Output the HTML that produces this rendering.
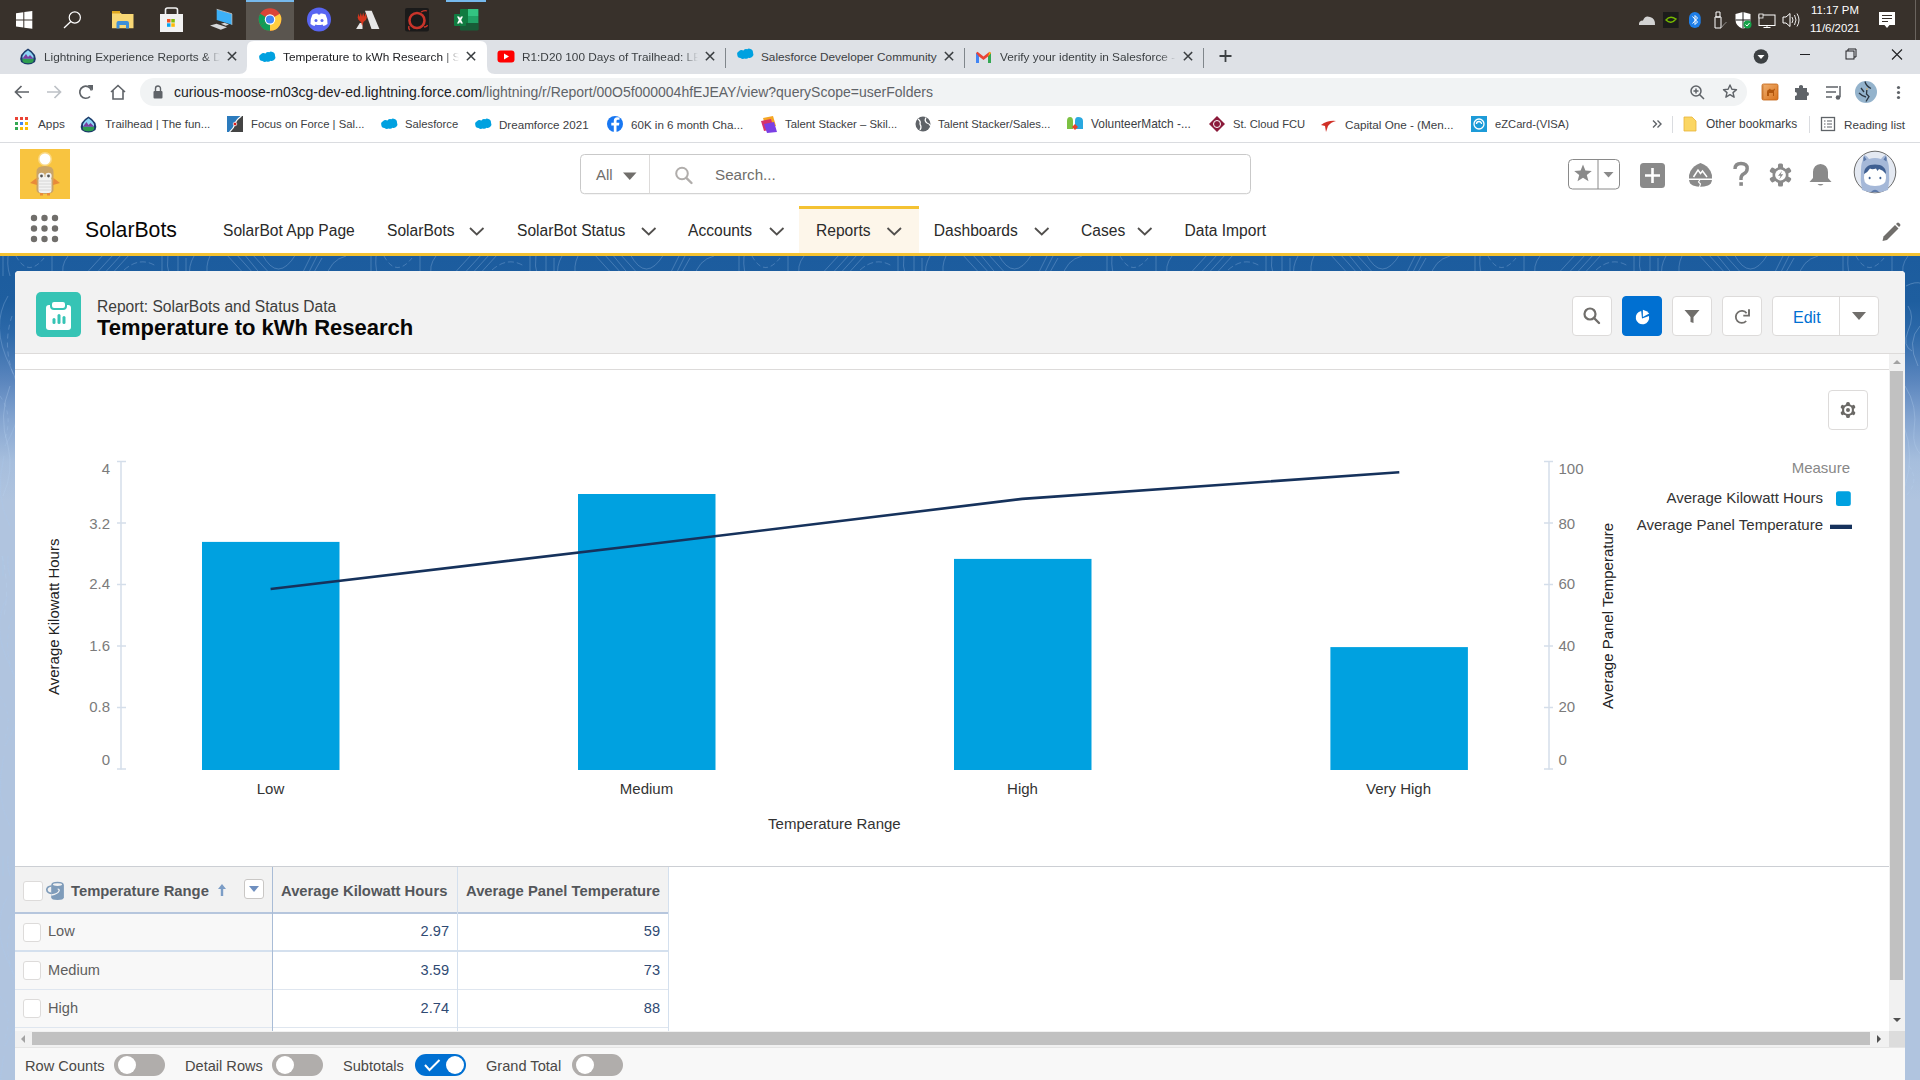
<!DOCTYPE html>
<html><head><meta charset="utf-8">
<style>
*{box-sizing:border-box;margin:0;padding:0}
html,body{width:1920px;height:1080px;overflow:hidden;background:#fff;font-family:"Liberation Sans",sans-serif;position:relative}
.a{position:absolute}
.t{position:absolute;white-space:nowrap;line-height:1}
#taskbar{left:0;top:0;width:1920px;height:40px;background:#38312b}
#tabs{left:0;top:40px;width:1920px;height:34px;background:#dee1e6}
#toolbar{left:0;top:74px;width:1920px;height:35px;background:#fff}
#bm{left:0;top:109px;width:1920px;height:34px;background:#fff;border-bottom:1px solid #d9d9d9}
#sfh{left:0;top:143px;width:1920px;height:63px;background:#fff}
#nav{left:0;top:206px;width:1920px;height:47px;background:#fff}
#ybar{left:0;top:253px;width:1920px;height:3px;background:#f4c232}
#bg{left:0;top:256px;width:1920px;height:824px;background:linear-gradient(#1c5c9e 0px,#1e5e9f 45px,#2d69a9 78px,#5b86be 125px,#86a6d1 165px,#a6bedd 205px,#b0c4df 245px,#b0c4df 824px)}
#card{left:15px;top:271px;width:1890px;height:820px;background:#fff;border-radius:4px;overflow:hidden}
</style></head>
<body>
<div id="taskbar" class="a"></div>
<div id="tabs" class="a"></div>
<div id="toolbar" class="a"></div>
<div id="bm" class="a"></div>

<!-- TASKBAR -->
<svg class="a" style="left:0;top:0" width="1920" height="40" viewBox="0 0 1920 40">
 <rect x="246" y="0" width="48" height="40" fill="#5a554f"/>
 <rect x="246" y="0" width="48" height="2" fill="#76b9ed"/>
 <rect x="446" y="0" width="40" height="2" fill="#76b9ed"/>
 <!-- windows -->
 <g fill="#fff"><path d="M16 13.3 L23.3 12.3 V19.4 H16 Z"/><path d="M24.3 12.1 L32.3 11 V19.4 H24.3 Z"/><path d="M16 20.4 H23.3 V27.5 L16 26.5 Z"/><path d="M24.3 20.4 H32.3 V28.8 L24.3 27.7 Z"/></g>
 <!-- search -->
 <circle cx="74.8" cy="17.5" r="5.6" fill="none" stroke="#fff" stroke-width="1.2"/><line x1="70.8" y1="21.5" x2="64" y2="28" stroke="#fff" stroke-width="1.3"/>
 <!-- folder -->
 <path d="M112 12.5 H120 L122 14 H133.5 V28.3 H112 Z" fill="#f8d775"/><rect x="112" y="11" width="8" height="2.5" fill="#e0a820"/>
 <path d="M116.5 28.5 V23 Q116.5 21 118.5 21 H127 Q129 21 129 23 V28.5 H126 V25 H119.5 V28.5 Z" fill="#3d8fd9"/>
 <!-- store -->
 <path d="M160 14 H183 V32 H160 Z" fill="#f2f2f2"/><path d="M165.5 14 V10 Q165.5 8 167.5 8 H175.5 Q177.5 8 177.5 10 V14" fill="none" stroke="#f2f2f2" stroke-width="1.6"/>
 <rect x="167" y="19" width="3.5" height="3.5" fill="#f35325"/><rect x="171.3" y="19" width="3.5" height="3.5" fill="#81bc06"/><rect x="167" y="23.3" width="3.5" height="3.5" fill="#05a6f0"/><rect x="171.3" y="23.3" width="3.5" height="3.5" fill="#ffba08"/>
 <!-- remote desktop -->
 <path d="M216.7 9.5 L232 14 V24.8 L216.7 20 Z" fill="#3cb0f7"/><path d="M216.7 9.3 L232 13.8" stroke="#d0d0d0" stroke-width="0.8"/><path d="M231.9 14 V25" stroke="#b8b8b8" stroke-width="0.8"/><path d="M210 25.6 L216.5 23.7 L227 27.2 L220.8 29.8 Z" fill="#d6d8da"/><path d="M221 23.8 L224.5 22.8 L229 24.6 L225.8 25.8 Z" fill="#d6d8da"/>
 <!-- chrome -->
 <circle cx="270" cy="19.5" r="11.3" fill="#db4437"/>
 <path d="M270 19.5 L260.2 25.15 A11.3 11.3 0 0 1 260.2 13.85 Z" fill="#0f9d58"/>
 <path d="M270 19.5 L270 30.8 A11.3 11.3 0 0 1 260.2 25.15 Z" fill="#0f9d58"/>
 <path d="M270 19.5 L279.8 13.85 A11.3 11.3 0 0 1 270 30.8 Z" fill="#ffcd40"/>
 <circle cx="270" cy="19.5" r="5.2" fill="#fff"/><circle cx="270" cy="19.5" r="4.1" fill="#4285f4"/>
 <!-- discord -->
 <circle cx="319" cy="19.5" r="12" fill="#5865f2"/>
 <path d="M312.5 14.5 Q316 13 317.5 13.5 L318 14.5 Q319 14.3 320 14.5 L320.5 13.5 Q322 13 325.5 14.5 Q328 19 327.5 24 Q325.5 25.5 323.5 26 L322.5 24.5 Q319 25.5 315.5 24.5 L314.5 26 Q312.5 25.5 310.5 24 Q310 19 312.5 14.5 Z" fill="#fff"/>
 <circle cx="316" cy="20.5" r="1.5" fill="#5865f2"/><circle cx="322" cy="20.5" r="1.5" fill="#5865f2"/>
 <!-- arena -->
 <path d="M365 10.7 H371.7 L379.4 28.9 H371.5 Z" fill="#e6e6e6"/><path d="M359.8 23 H362.5 V28.9 H356.1 Z" fill="#e6e6e6"/>
 <path d="M357.6 17.5 L358.6 13.5 L359.5 17 L360.8 12.8 L362 16.8 L363.2 12.6 L364.4 16.8 L365.6 13 L366.8 17.5 Q366.5 20.5 363.5 22 L362.2 26 L361 22 Q358 20.5 357.6 17.5 Z" fill="#d4361e"/>
 <!-- ffxiv -->
 <rect x="405" y="8" width="24" height="23.5" rx="2" fill="#1a1a1a"/><circle cx="417" cy="20.5" r="7.5" fill="none" stroke="#c8342a" stroke-width="2.6"/><path d="M421 12 Q425 10 427 11 M409 26 Q408 29 410 30 M424 27 Q427 27 427.5 25" fill="none" stroke="#c8342a" stroke-width="1.3"/>
 <!-- excel -->
 <rect x="460" y="9" width="18.3" height="21.2" rx="1" fill="#107c41"/><rect x="468" y="9" width="10.3" height="7" fill="#33c481"/><rect x="468" y="16" width="10.3" height="7" fill="#21a366"/><rect x="460" y="23" width="18.3" height="7.2" fill="#185c37"/>
 <rect x="454" y="14" width="12" height="12" rx="1" fill="#107c41"/><path d="M457 16.5 L459.2 16.5 L460 18.3 L460.9 16.5 H463 L461.2 20 L463 23.5 H460.9 L460 21.7 L459.1 23.5 H457 L458.8 20 Z" fill="#fff"/>
 <!-- tray -->
 <path d="M1639 25 Q1638.5 20.5 1643 20.5 Q1645 15 1650 17 Q1655.5 18.5 1655 25 Z" fill="#d3d3d3"/>
 <rect x="1663" y="12" width="15.6" height="16" fill="#1c1c1c"/><path d="M1666 20 Q1670 15 1676 19 Q1671 25 1666 20 Z" fill="none" stroke="#76b900" stroke-width="1.4"/>
 <rect x="1689" y="12" width="11.7" height="16" rx="5.8" fill="#1e7ee8"/><path d="M1692.5 16.5 L1697.5 22 L1695 24.5 V15.5 L1697.5 18 L1692.5 23.5" fill="none" stroke="#fff" stroke-width="1"/>
 <path d="M1715 17 H1721 V28 H1715 Z M1716 12 H1720 V17 H1716 Z" fill="none" stroke="#fff" stroke-width="1"/><path d="M1721.5 27.5 L1723.5 25 L1726.5 22" fill="none" stroke="#aaa" stroke-width="0.8"/>
 <path d="M1735.5 14 L1743 12 L1750.5 14 V20 Q1750.5 26 1743 29 Q1735.5 26 1735.5 20 Z" fill="#fff"/><path d="M1743 12 V29 M1735.5 20 H1750.5" stroke="#1a1a1a" stroke-width="1"/><circle cx="1747.5" cy="24.5" r="4" fill="#16a34a"/><path d="M1745.5 24.5 L1747 26 L1749.5 23" fill="none" stroke="#fff" stroke-width="1"/>
 <rect x="1759" y="15" width="16" height="10.5" fill="none" stroke="#fff" stroke-width="1"/><path d="M1767 25.5 V27.5 M1763.5 27.5 H1770.5" stroke="#fff" stroke-width="1"/><rect x="1759" y="14" width="4" height="4" fill="#38312b" stroke="#fff" stroke-width="0.8"/>
 <path d="M1783 17 H1786 L1790 13.5 V26.5 L1786 23 H1783 Z" fill="none" stroke="#fff" stroke-width="1"/><path d="M1792 17 Q1794 20 1792 23 M1794.5 15 Q1797.5 20 1794.5 25 M1797 13.5 Q1801 20 1797 26.5" fill="none" stroke="#fff" stroke-width="0.9"/>
 <path d="M1879 12 H1895 V25 H1889.5 L1887 28 L1884.5 25 H1879 Z" fill="#fff"/><path d="M1882 15.5 H1892 M1882 18.5 H1892 M1882 21.5 H1888" stroke="#38312b" stroke-width="1"/>
 <rect x="1915" y="0" width="1" height="40" fill="#6a645e"/>
</svg>
<div class="t" style="left:1810px;top:5px;font-size:11.4px;color:#fff;width:50px;text-align:center">11:17 PM</div>
<div class="t" style="left:1810px;top:23px;font-size:11.4px;color:#fff;width:50px;text-align:center">11/6/2021</div>

<!-- CHROME TABS -->
<svg class="a" style="left:0;top:40px" width="1920" height="34" viewBox="0 40 1920 34">
 <path d="M239 74 Q247 74 247 66 V48 Q247 41 254 41 H480 Q487 41 487 48 V66 Q487 74 495 74 Z" fill="#fff"/>
 <g transform="translate(19.5 48)"><path d="M8.5 0.5 Q13 3 15.5 7 Q17 11 15.5 14 Q12 16.5 8.5 16.5 Q5 16.5 1.5 14 Q0 11 1.5 7 Q4 3 8.5 0.5 Z" fill="#1b3a6a"/><path d="M8.5 2.3 Q12 4.5 14 8 L14 10.5 H3 L3 8 Q5 4.5 8.5 2.3 Z" fill="#8ed5f5"/><path d="M3 10.5 L6.5 6 L8.5 9 L10.5 7 L14 10.5 Z" fill="#7c3d9f"/><path d="M2.8 11 H14.2 Q14.5 13.5 13 14.5 Q11 15.2 8.5 15.2 Q6 15.2 4 14.5 Q2.5 13.5 2.8 11 Z" fill="#2e9e4f"/></g>
 <g stroke="#3c4043" stroke-width="1.5" stroke-linecap="square"><path d="M228.4 52.6 L235.6 59.8 M235.6 52.6 L228.4 59.8"/><path d="M467.4 52.6 L474.6 59.8 M474.6 52.6 L467.4 59.8"/><path d="M706.4 52.6 L713.6 59.8 M713.6 52.6 L706.4 59.8"/><path d="M945.4 52.6 L952.6 59.8 M952.6 52.6 L945.4 59.8"/><path d="M1184.4 52.6 L1191.6 59.8 M1191.6 52.6 L1184.4 59.8"/></g>
 <path transform="translate(259 51)" d="M6.5 2.5 Q8 0.5 10.3 1.3 Q11.5 0 13.5 1 Q16 1.5 16 4.5 Q17 6.5 15.5 8.5 Q14 10.5 11.5 9.8 Q10 11.5 7.5 10.5 Q5.5 11.5 3.5 10 Q0.5 10 0.3 7 Q-0.5 4.5 2 3.3 Q3.5 1.3 6.5 2.5 Z" fill="#00a1e0"/><path transform="translate(737 48)" d="M6.5 2.5 Q8 0.5 10.3 1.3 Q11.5 0 13.5 1 Q16 1.5 16 4.5 Q17 6.5 15.5 8.5 Q14 10.5 11.5 9.8 Q10 11.5 7.5 10.5 Q5.5 11.5 3.5 10 Q0.5 10 0.3 7 Q-0.5 4.5 2 3.3 Q3.5 1.3 6.5 2.5 Z" fill="#00a1e0"/>
 <rect x="497.5" y="50.5" width="17" height="12" rx="3" fill="#ff0000"/><path d="M504 53.5 V59.5 L509 56.5 Z" fill="#fff"/>
 <rect x="725" y="48" width="1" height="20" fill="#80868b"/>
 <rect x="964" y="48" width="1" height="20" fill="#80868b"/>
 <rect x="1203" y="48" width="1" height="20" fill="#80868b"/>
 <g transform="translate(976 51)"><path d="M0 2 V12 H3 V5.5 L7.5 9 L12 5.5 V12 H15 V2 L13.5 0.8 L7.5 5.5 L1.5 0.8 Z" fill="#ea4335"/><path d="M0 2 V12 H3 V5.5 Z" fill="#4285f4"/><path d="M12 5.5 V12 H15 V2 Z" fill="#34a853"/><path d="M13.5 0.8 L15 2 L12 5.5 Z" fill="#fbbc04"/></g>
 <path d="M1225.5 50 V62 M1219.5 56 H1231.5" stroke="#3c4043" stroke-width="1.8"/>
 <circle cx="1761" cy="56.5" r="7.3" fill="#3c4043"/><path d="M1757.5 55 H1764.5 L1761 59 Z" fill="#fff"/>
 <path d="M1800 54.5 H1810" stroke="#202124" stroke-width="1"/>
 <rect x="1846" y="51" width="8" height="8" fill="none" stroke="#202124" stroke-width="1"/><path d="M1848 51 V49 H1856 V57 H1854" fill="none" stroke="#202124" stroke-width="1"/>
 <path d="M1892 49.5 L1902 59.5 M1902 49.5 L1892 59.5" stroke="#202124" stroke-width="1.1"/>
</svg>
<div class="t" style="left:44px;top:51.5px;font-size:11.8px;color:#3c4043;width:176px;overflow:hidden;-webkit-mask-image:linear-gradient(90deg,#000 160px,transparent 176px)">Lightning Experience Reports &amp; Dashboards</div>
<div class="t" style="left:283px;top:51.5px;font-size:11.8px;color:#202124;width:176px;overflow:hidden;-webkit-mask-image:linear-gradient(90deg,#000 160px,transparent 176px)">Temperature to kWh Research | Salesforce</div>
<div class="t" style="left:522px;top:51.5px;font-size:11.8px;color:#3c4043;width:176px;overflow:hidden;-webkit-mask-image:linear-gradient(90deg,#000 160px,transparent 176px)">R1:D20 100 Days of Trailhead: LEX Reports</div>
<div class="t" style="left:761px;top:51.5px;font-size:11.8px;color:#3c4043;width:178px;overflow:hidden">Salesforce Developer Community</div>
<div class="t" style="left:1000px;top:51.5px;font-size:11.8px;color:#3c4043;width:176px;overflow:hidden;-webkit-mask-image:linear-gradient(90deg,#000 160px,transparent 176px)">Verify your identity in Salesforce - Gmail</div>
<!-- TOOLBAR -->
<svg class="a" style="left:0;top:74px" width="1920" height="35" viewBox="0 74 1920 35">
 <rect x="140" y="78" width="1607" height="28" rx="14" fill="#f1f3f4"/>
 <path d="M29 92 H16 M21.5 86 L15.5 92 L21.5 98" fill="none" stroke="#5f6368" stroke-width="1.7"/>
 <path d="M47 92 H60 M54.5 86 L60.5 92 L54.5 98" fill="none" stroke="#bdc1c6" stroke-width="1.7"/>
 <path d="M91.5 90.5 A6 6 0 1 0 90 96.5" fill="none" stroke="#5f6368" stroke-width="1.7"/><path d="M87.5 85 H93 V90.5 Z" fill="#5f6368"/>
 <path d="M111 92 L118 85.5 L125 92 M113 90.5 V99 H123 V90.5" fill="none" stroke="#5f6368" stroke-width="1.6"/>
 <rect x="153.5" y="91" width="9" height="7.5" rx="1" fill="#5f6368"/><path d="M155.5 91 V88.5 A2.5 2.5 0 0 1 160.5 88.5 V91" fill="none" stroke="#5f6368" stroke-width="1.4"/>
 <circle cx="1696" cy="91" r="5" fill="none" stroke="#5f6368" stroke-width="1.5"/><path d="M1699.5 94.5 L1704 99 M1693.5 91 H1698.5 M1696 88.5 V93.5" stroke="#5f6368" stroke-width="1.5"/>
 <path d="M1730 85 L1731.9 89.3 L1736.5 89.6 L1733 92.6 L1734.1 97.2 L1730 94.7 L1725.9 97.2 L1727 92.6 L1723.5 89.6 L1728.1 89.3 Z" fill="none" stroke="#5f6368" stroke-width="1.4" stroke-linejoin="round"/>
 <defs><linearGradient id="cam" x1="0" y1="0" x2="1" y2="1"><stop offset="0" stop-color="#f0b070"/><stop offset="1" stop-color="#d9731c"/></linearGradient></defs><rect x="1762" y="84" width="16" height="16" rx="1.5" fill="url(#cam)" stroke="#c25f10" stroke-width="0.8"/><path d="M1763 85.5 V98.5" stroke="#a04d0a" stroke-width="0.8" stroke-dasharray="1 1"/><path d="M1767 96 V92 Q1767 89.5 1769 89.5 L1770 88.5 L1771 90 Q1772 89 1773 90 L1774.5 88.5 L1775 89.5 L1774 91 V96 H1773 V93 L1769 93 V96 Z" fill="#b2560c"/>
 <path d="M1795 88 H1799 V86 Q1801 84 1803 86 V88 H1807 V92 Q1809 92 1809 94 Q1809 96 1807 96 V100 H1795 V96 Q1797 96 1797 94 Q1797 92 1795 92 Z" fill="#5f6368"/>
 <path d="M1826 87 H1838 M1826 92 H1836 M1826 97 H1832" stroke="#5f6368" stroke-width="1.5"/><path d="M1840 86 V97" stroke="#5f6368" stroke-width="1.5"/><circle cx="1838" cy="97.5" r="2.3" fill="#5f6368"/>
 <circle cx="1866" cy="92" r="11" fill="#94b3cc"/><path d="M1865 81.5 Q1866 86 1871 88.5 M1867 88 L1866.5 94 L1869 96.5 L1866 101.5 M1859 93 Q1862 96 1866 97 M1861 88 L1864 92" fill="none" stroke="#2b3642" stroke-width="1.3"/><circle cx="1867" cy="89" r="1" fill="#d8c9a0"/>
 <circle cx="1898.5" cy="87.5" r="1.6" fill="#5f6368"/><circle cx="1898.5" cy="92.5" r="1.6" fill="#5f6368"/><circle cx="1898.5" cy="97.5" r="1.6" fill="#5f6368"/>
</svg>
<div class="t" style="left:174px;top:85px;font-size:14px;color:#202124">curious-moose-rn03cg-dev-ed.lightning.force.com<span style="color:#5f6368">/lightning/r/Report/00O5f000004hfEJEAY/view?queryScope=userFolders</span></div>
<!-- BOOKMARKS -->
<svg class="a" style="left:0;top:109px" width="1920" height="33" viewBox="0 109 1920 33">
 <g><rect x="15" y="117" width="3" height="3" fill="#ea4335"/><rect x="20" y="117" width="3" height="3" fill="#ea4335"/><rect x="25" y="117" width="3" height="3" fill="#ea4335"/><rect x="15" y="122" width="3" height="3" fill="#34a853"/><rect x="20" y="122" width="3" height="3" fill="#4285f4"/><rect x="25" y="122" width="3" height="3" fill="#fbbc04"/><rect x="15" y="127" width="3" height="3" fill="#34a853"/><rect x="20" y="127" width="3" height="3" fill="#fbbc04"/><rect x="25" y="127" width="3" height="3" fill="#fbbc04"/></g>
 <g transform="translate(80 116)"><path d="M8.5 0.5 Q13 3 15.5 7 Q17 11 15.5 14 Q12 16.5 8.5 16.5 Q5 16.5 1.5 14 Q0 11 1.5 7 Q4 3 8.5 0.5 Z" fill="#1b3a6a"/><path d="M8.5 2.3 Q12 4.5 14 8 L14 10.5 H3 L3 8 Q5 4.5 8.5 2.3 Z" fill="#8ed5f5"/><path d="M3 10.5 L6.5 6 L8.5 9 L10.5 7 L14 10.5 Z" fill="#7c3d9f"/><path d="M2.8 11 H14.2 Q14.5 13.5 13 14.5 Q11 15.2 8.5 15.2 Q6 15.2 4 14.5 Q2.5 13.5 2.8 11 Z" fill="#2e9e4f"/></g>
 <path d="M227 116 H243 V132 H227 Z" fill="#444"/><path d="M227 116 H241.5 Q236 120 235 124 Q234 128 229.5 132 H227 Z" fill="#2c7bbd"/><path d="M241.5 116 Q236 120 235 124 Q234 128 229.5 132" fill="none" stroke="#fff" stroke-width="1.1"/><circle cx="235" cy="124" r="1.8" fill="#e0201b" stroke="#fff" stroke-width="0.7"/>
 <path transform="translate(381 118)" d="M6.5 2.5 Q8 0.5 10.3 1.3 Q11.5 0 13.5 1 Q16 1.5 16 4.5 Q17 6.5 15.5 8.5 Q14 10.5 11.5 9.8 Q10 11.5 7.5 10.5 Q5.5 11.5 3.5 10 Q0.5 10 0.3 7 Q-0.5 4.5 2 3.3 Q3.5 1.3 6.5 2.5 Z" fill="#00a1e0"/><path transform="translate(475 118)" d="M6.5 2.5 Q8 0.5 10.3 1.3 Q11.5 0 13.5 1 Q16 1.5 16 4.5 Q17 6.5 15.5 8.5 Q14 10.5 11.5 9.8 Q10 11.5 7.5 10.5 Q5.5 11.5 3.5 10 Q0.5 10 0.3 7 Q-0.5 4.5 2 3.3 Q3.5 1.3 6.5 2.5 Z" fill="#00a1e0"/>
 <circle cx="615" cy="124" r="8" fill="#1877f2"/><path d="M616.5 132 V125.5 H619 L619.4 122.8 H616.5 V121 Q616.5 119.8 617.8 119.8 H619.5 V117.5 Q618.5 117.3 617.3 117.3 Q613.8 117.3 613.8 120.8 V122.8 H611.3 V125.5 H613.8 V132 Z" fill="#fff"/>
 <path d="M763 118 L773 116 L776 126 L766 128 Z" fill="#f5a623"/><path d="M761 121 L771 119 L774 129 L764 131 Z" fill="#d6336c"/><path d="M764 124 L774 122 L777 132 L767 133 Z" fill="#7b3fe4"/>
 <circle cx="923" cy="124" r="7.5" fill="#5f6368"/><path d="M918 119 Q921 121 920 124 Q922 127 920 130 M926 117.5 Q924 121 927 123 Q930 124 930.5 126" fill="none" stroke="#fff" stroke-width="1.3"/>
 <path d="M1067 121 Q1067 117 1070 117 Q1073 117 1073 121 V129 H1067 Z" fill="#7cc142"/><path d="M1075 121 Q1075 117 1078 117 Q1083 117 1083 121 V129 H1075 Z" fill="#29a8e0"/><path d="M1072 127 L1075 124 L1078 127 L1075 130 Z" fill="#e8412c"/>
 <path d="M1217 116 L1225 124 L1217 132 L1209 124 Z" fill="#8b1a3a"/><circle cx="1217" cy="124" r="3.5" fill="none" stroke="#fff" stroke-width="1"/>
 <path d="M1321 125 Q1328 120 1336 121 Q1331 122 1328 126 L1326 132 L1325 126 Z" fill="#d03027"/>
 <rect x="1471" y="116" width="16" height="16" fill="#1d9bd8"/><path d="M1479 124 m-5 0 a5 5 0 1 0 10 0 a5 5 0 1 0 -10 0 M1479 124 m-2.5 0 a2.5 2.5 0 1 1 5 0" fill="none" stroke="#fff" stroke-width="1.3"/>
 <path d="M1653 120.5 L1656.5 124 L1653 127.5 M1657.5 120.5 L1661 124 L1657.5 127.5" fill="none" stroke="#5f6368" stroke-width="1.4"/>
 <rect x="1672" y="116" width="1" height="17" fill="#dadce0"/>
 <path d="M1684 117 H1692 L1696 121 V131 H1684 Z" fill="#fbd663" stroke="#e8b43a" stroke-width="0.8"/>
 <rect x="1809" y="116" width="1" height="17" fill="#dadce0"/>
 <rect x="1821.5" y="117.5" width="13" height="13" fill="none" stroke="#5f6368" stroke-width="1.3"/><path d="M1824 121 H1825.5 M1827 121 H1832 M1824 124 H1825.5 M1827 124 H1832 M1824 127 H1825.5 M1827 127 H1832" stroke="#5f6368" stroke-width="1.2"/>
</svg>
<div class="t" style="left:38px;top:118.61px;font-size:11.8px;color:#3c4043">Apps</div>
<div class="t" style="left:105px;top:118.87px;font-size:11.5px;color:#3c4043">Trailhead | The fun...</div>
<div class="t" style="left:251px;top:119.03px;font-size:11.3px;color:#3c4043">Focus on Force | Sal...</div>
<div class="t" style="left:405px;top:119.08px;font-size:11.25px;color:#3c4043">Salesforce</div>
<div class="t" style="left:499px;top:118.78px;font-size:11.6px;color:#3c4043">Dreamforce 2021</div>
<div class="t" style="left:631px;top:118.78px;font-size:11.6px;color:#3c4043">60K in 6 month Cha...</div>
<div class="t" style="left:785px;top:118.99px;font-size:11.35px;color:#3c4043">Talent Stacker – Skil...</div>
<div class="t" style="left:938px;top:119.03px;font-size:11.3px;color:#3c4043">Talent Stacker/Sales...</div>
<div class="t" style="left:1091px;top:118.53px;font-size:11.9px;color:#3c4043">VolunteerMatch -...</div>
<div class="t" style="left:1233px;top:119.12px;font-size:11.2px;color:#3c4043">St. Cloud FCU</div>
<div class="t" style="left:1345px;top:118.70px;font-size:11.7px;color:#3c4043">Capital One - (Men...</div>
<div class="t" style="left:1495px;top:119.12px;font-size:11.2px;color:#3c4043">eZCard-(VISA)</div>
<div class="t" style="left:1706px;top:118.53px;font-size:11.9px;color:#3c4043">Other bookmarks</div>
<div class="t" style="left:1844px;top:118.70px;font-size:11.7px;color:#3c4043">Reading list</div>
<div id="sfh" class="a"></div>
<div id="nav" class="a"></div>

<!-- SF HEADER -->
<div class="a" style="left:0;top:142px;width:1920px;height:1px;background:#dadce0"></div>
<svg class="a" style="left:0;top:143px" width="1920" height="113" viewBox="0 143 1920 113">
 <rect x="20" y="149" width="50" height="50" fill="#f8c440"/>
 <circle cx="45" cy="159" r="5.5" fill="#fff"/><circle cx="45" cy="159" r="7" fill="#fff" opacity="0.35"/>
 <path d="M36.5 172 Q36 166 45 166 Q54 166 53.5 172 V190 Q53.5 194 45 194 Q36.5 194 36.5 190 Z" fill="#c9a468"/>
 <rect x="38.5" y="177" width="13" height="16" rx="3" fill="#f2f2f2"/><path d="M39 181 H51 M39 184 H51 M39 187 H51 M39 190 H51" stroke="#cfcfcf" stroke-width="0.8"/>
 <circle cx="41.5" cy="176" r="3.2" fill="#f2f2f2"/><circle cx="48.5" cy="176" r="3.2" fill="#f2f2f2"/><circle cx="41.5" cy="176" r="1.4" fill="#555"/><circle cx="48.5" cy="176" r="1.4" fill="#555"/>
 <path d="M36.5 178 L30 183 L37 185 Z M53.5 178 L60 183 L53 185 Z" fill="#e88a3a"/>
 <rect x="40" y="193" width="3" height="2.5" fill="#e88a3a"/><rect x="47" y="193" width="3" height="2.5" fill="#e88a3a"/>
 <!-- search -->
 <rect x="580.5" y="154.5" width="670" height="39.2" rx="4" fill="#fff" stroke="#c9c9c9"/>
 <line x1="649.5" y1="155" x2="649.5" y2="193.2" stroke="#dddbda"/>
 <path d="M623 172.5 H636.5 L629.75 180 Z" fill="#706e6b"/>
 <circle cx="682" cy="173.5" r="5.8" fill="none" stroke="#b0adab" stroke-width="2"/><path d="M686.3 177.8 L691.5 183" stroke="#b0adab" stroke-width="2.4" stroke-linecap="round"/>
 <!-- fav -->
 <rect x="1568.5" y="159.5" width="51" height="29.5" rx="4" fill="#fff" stroke="#8a8a8a"/>
 <line x1="1598" y1="160" x2="1598" y2="189" stroke="#8a8a8a"/>
 <path d="M1583 164.5 L1585.4 170.6 L1591.8 170.9 L1586.8 175 L1588.5 181.2 L1583 177.7 L1577.5 181.2 L1579.2 175 L1574.2 170.9 L1580.6 170.6 Z" fill="#8a8a8a"/>
 <path d="M1603.5 172 H1613.5 L1608.5 177.5 Z" fill="#8a8a8a"/>
 <rect x="1640" y="163" width="25" height="25" rx="3.5" fill="#8a8a8a"/><path d="M1652.5 168 V183 M1645 175.5 H1660" stroke="#fff" stroke-width="2.6"/>
 <path d="M1700.5 163 Q1707.5 165.5 1710.5 171 Q1712.5 175 1712 178.5 H1689 Q1688.5 175 1690.5 171 Q1693.5 165.5 1700.5 163 Z" fill="#8a8a8a"/><path d="M1693.5 177 L1698 170 L1700.5 173.5 L1702.5 171 L1707 177" fill="none" stroke="#fff" stroke-width="1.5"/><path d="M1689 180 H1712 Q1711.5 184 1708 185.5 Q1704 186.8 1700.5 186.8 Q1697 186.8 1693 185.5 Q1689.5 184 1689 180 Z" fill="#8a8a8a"/><path d="M1700 179.5 L1698.5 182 L1700.5 184 L1699.5 187" fill="none" stroke="#fff" stroke-width="1.1"/>
 <path d="M1735 169 Q1735 163.5 1741 163.5 Q1747.2 163.5 1747.2 168.5 Q1747.2 172 1743.5 174 Q1741 175.5 1741 178.5 V180" fill="none" stroke="#8a8a8a" stroke-width="3.4"/><rect x="1739.3" y="182.2" width="3.6" height="3.6" fill="#8a8a8a"/>
 <g fill="#8a8a8a"><circle cx="1780.5" cy="175" r="8"/><rect x="1778" y="163.5" width="5" height="23" rx="1.5"/><rect x="1778" y="163.5" width="5" height="23" rx="1.5" transform="rotate(60 1780.5 175)"/><rect x="1778" y="163.5" width="5" height="23" rx="1.5" transform="rotate(120 1780.5 175)"/></g>
 <circle cx="1780.5" cy="175" r="5.4" fill="#fff"/><path d="M1782.2 170.8 L1778 175.8 H1780.6 L1779.2 179.4 L1783.2 174.2 H1780.6 Z" fill="#8a8a8a"/>
 <path d="M1820.5 164 Q1813.5 164.5 1813 172 V178 L1809.5 182 H1831.5 L1828 178 V172 Q1827.5 164.5 1820.5 164 Z" fill="#8a8a8a"/><path d="M1817.5 184 Q1820.5 187 1823.5 184 Z" fill="#8a8a8a"/>
 <circle cx="1875" cy="172" r="20.8" fill="#e4e9f2" stroke="#6b6b6b" stroke-width="1"/>
 <path d="M1862 190 Q1860 180 1861 170 Q1861 162 1864 158 Q1863 156 1864.5 155 Q1867 156 1869 159 Q1875 157 1881 159 Q1883 156 1885.5 155 Q1887 156 1886 158 Q1889 162 1889 170 Q1890 180 1888 190 Q1875 195 1862 190 Z" fill="#a5b8d8"/>
 <path d="M1864 156 Q1862.5 158 1863.5 161.5 L1866.5 159.5 Z M1886 156 Q1887.5 158 1886.5 161.5 L1883.5 159.5 Z" fill="#5b78a8"/>
 <path d="M1864 178 Q1864 165 1875 165 Q1886 165 1886 178 Q1886 186 1875 186 Q1864 186 1864 178 Z" fill="#fff"/>
 <path d="M1864 174 Q1864 164.5 1875 164.5 Q1886 164.5 1886 174 Q1883 170 1879 169 L1877.5 171 L1876 168.5 Q1872 170 1870 168.5 Q1868 172 1864 174 Z" fill="#3f5f92"/>
 <ellipse cx="1869.6" cy="178" rx="1" ry="1.3" fill="#3f5f92"/><ellipse cx="1880.4" cy="178" rx="1" ry="1.3" fill="#3f5f92"/>
 <path d="M1871 192 Q1875 187.5 1879 192 Z" fill="#5b78a8"/>
 <!-- nav -->
 <circle cx="34.0" cy="218.0" r="3.2" fill="#706e6b"/><circle cx="34.0" cy="228.5" r="3.2" fill="#706e6b"/><circle cx="34.0" cy="239.0" r="3.2" fill="#706e6b"/><circle cx="44.5" cy="218.0" r="3.2" fill="#706e6b"/><circle cx="44.5" cy="228.5" r="3.2" fill="#706e6b"/><circle cx="44.5" cy="239.0" r="3.2" fill="#706e6b"/><circle cx="55.0" cy="218.0" r="3.2" fill="#706e6b"/><circle cx="55.0" cy="228.5" r="3.2" fill="#706e6b"/><circle cx="55.0" cy="239.0" r="3.2" fill="#706e6b"/>
 <rect x="799" y="206" width="120" height="47" fill="#fdf6ea"/>
 <rect x="799" y="206" width="120" height="3" fill="#f4c232"/>
 <path d="M470 228 L476.75 234.5 L483.5 228" fill="none" stroke="#514f4d" stroke-width="1.8"/><path d="M642 228 L648.75 234.5 L655.5 228" fill="none" stroke="#514f4d" stroke-width="1.8"/><path d="M770 228 L776.75 234.5 L783.5 228" fill="none" stroke="#514f4d" stroke-width="1.8"/><path d="M887.5 228 L894.25 234.5 L901.0 228" fill="none" stroke="#514f4d" stroke-width="1.8"/><path d="M1035 228 L1041.75 234.5 L1048.5 228" fill="none" stroke="#514f4d" stroke-width="1.8"/><path d="M1138 228 L1144.75 234.5 L1151.5 228" fill="none" stroke="#514f4d" stroke-width="1.8"/>
 <path d="M1883.5 236.5 L1895 225 L1898.5 228.5 L1887 240 L1882.5 241 Z" fill="#706e6b"/><path d="M1896 224 L1897 223 Q1898 222 1899 223 L1900 224 Q1901 225 1900 226 L1899 227 Z" fill="#706e6b"/>
</svg>
<div class="t" style="left:596px;top:167px;font-size:15px;color:#706e6b">All</div>
<div class="t" style="left:715px;top:167.3px;font-size:15.2px;color:#706e6b">Search...</div>
<div class="t" style="left:85px;top:219px;font-size:21.2px;color:#080707">SolarBots</div>
<div class="t" style="left:223px;top:223px;font-size:15.6px;color:#2a2a2a">SolarBot App Page</div>
<div class="t" style="left:387px;top:223px;font-size:15.6px;color:#2a2a2a">SolarBots</div>
<div class="t" style="left:517px;top:223px;font-size:15.6px;color:#2a2a2a">SolarBot Status</div>
<div class="t" style="left:688px;top:223px;font-size:15.6px;color:#2a2a2a">Accounts</div>
<div class="t" style="left:816px;top:223px;font-size:15.6px;color:#2a2a2a">Reports</div>
<div class="t" style="left:933.75px;top:223px;font-size:15.6px;color:#2a2a2a">Dashboards</div>
<div class="t" style="left:1081px;top:223px;font-size:15.6px;color:#2a2a2a">Cases</div>
<div class="t" style="left:1184.5px;top:223px;font-size:15.6px;color:#2a2a2a">Data Import</div>
<div id="ybar" class="a"></div>
<div id="bg" class="a"></div>
<svg class="a" style="left:0;top:256px" width="1920" height="824" viewBox="0 0 1920 824">
 <defs><pattern id="topo" x="0" y="0" width="368" height="300" patternUnits="userSpaceOnUse">
  <g fill="none" stroke="#a8c8ec" stroke-opacity="0.32" stroke-width="0.9">
   <path d="M3 -5 V20 M9 -5 Q6 8 10 20"/>
   <path d="M16 0 Q28 22 44 2" stroke-dasharray="5 3"/>
   <path d="M52 -5 V20"/>
   <path d="M68 0 Q60 10 64 22"/>
   <path d="M82 22 L104 -2 M92 22 L114 -2 M100 22 L122 -2 M108 22 L130 -2"/>
   <path d="M124 14 Q140 0 156 10" stroke-dasharray="6 3"/>
   <path d="M162 -2 V20 M168 -2 Q166 10 170 22 M178 -2 V20 M186 2 V18 M194 0 Q188 10 190 22"/>
   <path d="M210 0 Q205 10 208 22"/>
   <path d="M226 -2 L246 20 M236 -2 L254 18 M244 -2 L262 20 M252 -2 L272 20"/>
   <path d="M262 -2 Q278 28 296 -2"/>
   <path d="M300 22 L312 -2 M306 22 L318 -2 M313 18 L322 2"/>
   <path d="M326 22 Q330 4 346 0"/>
   <path d="M378 -2 Q382 10 374 22"/>
   <path d="M8 40 Q-10 70 10 110 Q30 150 5 190" />
   <path d="M12 60 Q2 90 14 120" stroke-dasharray="5 4"/>
   <path d="M4 200 Q-6 240 10 270"/>
   <path d="M0 140 Q14 160 4 185" stroke-dasharray="4 4"/>
  </g></pattern></defs>
 <rect x="0" y="0" width="1920" height="824" fill="url(#topo)"/>
 <g fill="none" stroke="#b8d2ee" stroke-opacity="0.35" stroke-width="0.9">
  <path d="M1906 30 Q1925 20 1930 40"/><path d="M1908 50 Q1915 60 1908 75 Q1902 90 1912 95"/><path d="M1920 70 Q1906 85 1918 110"/>
  <path d="M1905 130 Q1918 150 1914 175 Q1912 190 1922 200"/><path d="M1909 210 Q1920 225 1906 240" stroke-dasharray="4 3"/>
  <path d="M1904 170 Q1915 200 1905 230"/>
  <path d="M2 300 Q10 330 4 360" stroke-dasharray="5 4"/><path d="M10 130 Q-2 160 8 190 Q14 215 3 240"/>
 </g>
</svg>

<div id="card" class="a"></div>
<!-- card header -->
<div class="a" style="left:15px;top:271px;width:1890px;height:83px;background:#f2f2f2;border-radius:4px 4px 0 0;border-bottom:1px solid #dddbda"></div>
<div class="a" style="left:36px;top:292px;width:45px;height:45px;background:#36c4b5;border-radius:5px"></div>
<svg class="a" style="left:36px;top:292px" width="45" height="45" viewBox="0 0 45 45">
 <rect x="10" y="13" width="25" height="25" rx="3" fill="#fff"/>
 <rect x="15" y="9" width="15" height="8" rx="3" fill="#fff" stroke="#36c4b5" stroke-width="2"/>
 <rect x="16.5" y="26" width="3" height="6" rx="1.5" fill="#36c4b5"/>
 <rect x="21.5" y="22" width="3" height="10" rx="1.5" fill="#36c4b5"/>
 <rect x="26.5" y="24" width="3" height="8" rx="1.5" fill="#36c4b5"/>
</svg>
<div class="t" style="left:97px;top:298.5px;font-size:15.6px;color:#3e3e3c">Report: SolarBots and Status Data</div>
<div class="t" style="left:97px;top:317px;font-size:22px;font-weight:700;color:#080707">Temperature to kWh Research</div>
<!-- header buttons -->
<div class="a" style="left:1572px;top:296px;width:40px;height:40px;background:#fff;border:1px solid #dddbda;border-radius:4px"></div>
<svg class="a" style="left:1582px;top:306px" width="20" height="20" viewBox="0 0 20 20"><circle cx="8" cy="8" r="5.5" fill="none" stroke="#706e6b" stroke-width="2.2"/><line x1="12" y1="12" x2="17" y2="17" stroke="#706e6b" stroke-width="2.4" stroke-linecap="round"/></svg>
<div class="a" style="left:1622px;top:296px;width:40px;height:40px;background:#0070d2;border:1px solid #0070d2;border-radius:4px"></div>
<svg class="a" style="left:1620px;top:294px" width="44" height="44" viewBox="0 0 44 44"><path d="M21.2 17 A6.7 6.7 0 1 0 29 22.1 L22 24.6 Z" fill="#fff"/><path d="M22.9 22.9 L22.9 15.7 Q27 16.5 29.2 19.6 Z" fill="#fff"/></svg>
<div class="a" style="left:1672px;top:296px;width:40px;height:40px;background:#fff;border:1px solid #dddbda;border-radius:4px"></div>
<svg class="a" style="left:1682px;top:306px" width="20" height="20" viewBox="0 0 20 20"><path d="M2.5 4 H17.5 L11.5 11 V17 L8.5 16 V11 Z" fill="#706e6b"/></svg>
<div class="a" style="left:1722px;top:296px;width:40px;height:40px;background:#fff;border:1px solid #dddbda;border-radius:4px"></div>
<svg class="a" style="left:1720px;top:294px" width="44" height="44" viewBox="0 0 44 44"><path d="M26.6 19.3 A6 6 0 1 0 26.2 27" fill="none" stroke="#706e6b" stroke-width="1.8"/><path d="M29 15.3 V21.6 H23.3" fill="none" stroke="#706e6b" stroke-width="1.9"/></svg>
<div class="a" style="left:1772px;top:296px;width:107px;height:40px;background:#fff;border:1px solid #dddbda;border-radius:4px"></div>
<div class="a" style="left:1839px;top:297px;width:1px;height:38px;background:#dddbda"></div>
<div class="t" style="left:1793px;top:310px;font-size:16px;color:#0070d2">Edit</div>
<svg class="a" style="left:1851px;top:311px" width="16" height="10" viewBox="0 0 16 10"><path d="M1 1 H15 L8 9 Z" fill="#706e6b"/></svg>
<!-- strip -->
<div class="a" style="left:15px;top:369px;width:1874px;height:1px;background:#dddbda"></div>
<!-- vertical scrollbar -->
<div class="a" style="left:1889px;top:354px;width:16px;height:693px;background:#f1f1f1"></div>
<div class="a" style="left:1890px;top:371px;width:13px;height:609px;background:#c1c1c1"></div>
<svg class="a" style="left:1892px;top:359px" width="10" height="6" viewBox="0 0 10 6"><path d="M1 5 H9 L5 1 Z" fill="#a3a3a3"/></svg>
<svg class="a" style="left:1892px;top:1017px" width="10" height="6" viewBox="0 0 10 6"><path d="M1 1 H9 L5 5 Z" fill="#505050"/></svg>
<!-- chart settings btn -->
<div class="a" style="left:1828px;top:390px;width:40px;height:40px;background:#fff;border:1px solid #dddbda;border-radius:4px"></div>
<svg class="a" style="left:1838px;top:400px" width="20" height="20" viewBox="0 0 20 20"><g fill="#6b6966"><circle cx="10" cy="10" r="6"/><rect x="8.1" y="2" width="3.8" height="16" rx="1.6"/><rect x="8.1" y="2" width="3.8" height="16" rx="1.6" transform="rotate(60 10 10)"/><rect x="8.1" y="2" width="3.8" height="16" rx="1.6" transform="rotate(120 10 10)"/></g><circle cx="10" cy="10" r="3.9" fill="#fff"/><circle cx="10" cy="10" r="2" fill="#6b6966"/></svg>
<!-- chart -->
<svg class="a" style="left:0;top:0" width="1920" height="1080" viewBox="0 0 1920 1080" font-family="Liberation Sans" font-size="15">
<line x1="121" y1="461" x2="121" y2="769.5" stroke="#d4deea" stroke-width="1.5"/>
<line x1="1549" y1="461" x2="1549" y2="769.5" stroke="#d4deea" stroke-width="1.5"/>
<line x1="117" y1="461.5" x2="126" y2="461.5" stroke="#d4deea" stroke-width="1.5"/>
<line x1="1544" y1="461.5" x2="1553" y2="461.5" stroke="#d4deea" stroke-width="1.5"/>
<text x="110" y="473.5" text-anchor="end" fill="#7b7b7b">4</text>
<text x="1558.5" y="473.5" fill="#7b7b7b">100</text>
<line x1="117" y1="523" x2="126" y2="523" stroke="#d4deea" stroke-width="1.5"/>
<line x1="1544" y1="523" x2="1553" y2="523" stroke="#d4deea" stroke-width="1.5"/>
<text x="110" y="528.5" text-anchor="end" fill="#7b7b7b">3.2</text>
<text x="1558.5" y="528.5" fill="#7b7b7b">80</text>
<line x1="117" y1="584.5" x2="126" y2="584.5" stroke="#d4deea" stroke-width="1.5"/>
<line x1="1544" y1="584.5" x2="1553" y2="584.5" stroke="#d4deea" stroke-width="1.5"/>
<text x="110" y="589" text-anchor="end" fill="#7b7b7b">2.4</text>
<text x="1558.5" y="589" fill="#7b7b7b">60</text>
<line x1="117" y1="646" x2="126" y2="646" stroke="#d4deea" stroke-width="1.5"/>
<line x1="1544" y1="646" x2="1553" y2="646" stroke="#d4deea" stroke-width="1.5"/>
<text x="110" y="650.5" text-anchor="end" fill="#7b7b7b">1.6</text>
<text x="1558.5" y="650.5" fill="#7b7b7b">40</text>
<line x1="117" y1="707.5" x2="126" y2="707.5" stroke="#d4deea" stroke-width="1.5"/>
<line x1="1544" y1="707.5" x2="1553" y2="707.5" stroke="#d4deea" stroke-width="1.5"/>
<text x="110" y="712" text-anchor="end" fill="#7b7b7b">0.8</text>
<text x="1558.5" y="712" fill="#7b7b7b">20</text>
<line x1="117" y1="769" x2="126" y2="769" stroke="#d4deea" stroke-width="1.5"/>
<line x1="1544" y1="769" x2="1553" y2="769" stroke="#d4deea" stroke-width="1.5"/>
<text x="110" y="765" text-anchor="end" fill="#7b7b7b">0</text>
<text x="1558.5" y="765" fill="#7b7b7b">0</text>
<rect x="202" y="541.9" width="137.5" height="228.1" fill="#00a1e0"/>
<rect x="578" y="494.0" width="137.5" height="276.0" fill="#00a1e0"/>
<rect x="954" y="558.9" width="137.5" height="211.1" fill="#00a1e0"/>
<rect x="1330.4" y="647.1" width="137.5" height="122.9" fill="#00a1e0"/>
<polyline points="270.6,589 646.5,544.5 1022.3,498.9 1399.3,472.2" fill="none" stroke="#16325c" stroke-width="2.6" stroke-linejoin="round"/>
<text x="270.5" y="794" text-anchor="middle" fill="#333">Low</text>
<text x="646.5" y="794" text-anchor="middle" fill="#333">Medium</text>
<text x="1022.5" y="794" text-anchor="middle" fill="#333">High</text>
<text x="1398.5" y="794" text-anchor="middle" fill="#333">Very High</text>
<text x="834.4" y="829.4" text-anchor="middle" fill="#333">Temperature Range</text>
<text transform="translate(58.7 616.8) rotate(-90)" text-anchor="middle" fill="#222">Average Kilowatt Hours</text>
<text transform="translate(1613 616) rotate(-90)" text-anchor="middle" fill="#222">Average Panel Temperature</text>
<text x="1850" y="472.8" text-anchor="end" fill="#888">Measure</text>
<text x="1823" y="503.3" text-anchor="end" fill="#333">Average Kilowatt Hours</text>
<text x="1823" y="530.3" text-anchor="end" fill="#333">Average Panel Temperature</text>
<rect x="1836" y="491.3" width="14.8" height="14.8" rx="2.5" fill="#00a1e0"/>
<rect x="1830" y="524.7" width="22" height="4.3" fill="#16325c"/>
</svg>
<!-- chart bottom border -->
<div class="a" style="left:15px;top:866px;width:1874px;height:1px;background:#cccfd4"></div>


<!-- table -->
<div class="a" style="left:15px;top:867px;width:654px;height:45px;background:#f2f2f2"></div>
<div class="a" style="left:15px;top:912px;width:654px;height:2px;background:#b6c6dd"></div>
<div class="a" style="left:15px;top:914px;width:257px;height:117px;background:#f8f8f8"></div>
<div class="a" style="left:15px;top:950px;width:654px;height:2px;background:#d4e0ee"></div>
<div class="a" style="left:15px;top:989px;width:654px;height:1px;background:#dfe6ef"></div>
<div class="a" style="left:15px;top:1027px;width:654px;height:1px;background:#dfe6ef"></div>
<div class="a" style="left:272px;top:867px;width:1px;height:164px;background:#a9bcd6"></div>
<div class="a" style="left:457px;top:867px;width:1px;height:164px;background:#d4e0ee"></div>
<div class="a" style="left:668px;top:867px;width:1px;height:164px;background:#d4e0ee"></div>
<div class="a" style="left:23px;top:881px;width:20px;height:20px;background:#fff;border:1px solid #dddbda;border-radius:3px"></div>
<svg class="a" style="left:40px;top:875px" width="30" height="30" viewBox="0 0 30 30"><path d="M11.2 10 Q11.5 6.7 17.5 6.7 Q23.6 6.7 23.9 10 V22.5 Q23.6 25 17.5 25 Q11.5 25 11.2 22.5 Z" fill="#7f9cba"/><ellipse cx="17.5" cy="9.6" rx="4.6" ry="1.3" fill="#f2f2f2"/><path d="M11.5 11 Q7 11.5 6.8 14.5 Q7 18 11.5 18.3" fill="none" stroke="#7f9cba" stroke-width="1.7"/><path d="M17.7 14.2 Q19.3 14 19.2 15.6 Q18 19 11.3 20" fill="none" stroke="#f2f2f2" stroke-width="1.3"/></svg>
<div class="t" style="left:71px;top:883.8px;font-size:14.8px;font-weight:700;color:#54575b">Temperature Range</div>
<svg class="a" style="left:216px;top:883px" width="12" height="14" viewBox="0 0 12 14"><path d="M6 1 L10 6 H7.2 V13 H4.8 V6 H2 Z" fill="#7c9dc6"/></svg>
<div class="a" style="left:244px;top:879px;width:20px;height:20px;background:#fff;border:1px solid #c9c7c5;border-radius:3px"></div>
<svg class="a" style="left:248px;top:885px" width="12" height="8" viewBox="0 0 12 8"><path d="M1 1 H11 L6 7 Z" fill="#6f8fbf"/></svg>
<div class="t" style="left:281px;top:883.8px;font-size:14.8px;font-weight:700;color:#54575b">Average Kilowatt Hours</div>
<div class="t" style="left:466px;top:883.8px;font-size:14.8px;font-weight:700;color:#54575b">Average Panel Temperature</div>
<div class="a" style="left:23px;top:923px;width:18px;height:19px;background:#fff;border:1px solid #dddbda;border-radius:3px"></div>
<div class="t" style="left:48px;top:924px;font-size:14.6px;color:#5e5e5e">Low</div>
<div class="t" style="right:1471px;top:924px;font-size:14.6px;color:#2f4a73">2.97</div>
<div class="t" style="right:1260px;top:924px;font-size:14.6px;color:#2f4a73">59</div>
<div class="a" style="left:23px;top:961px;width:18px;height:19px;background:#fff;border:1px solid #dddbda;border-radius:3px"></div>
<div class="t" style="left:48px;top:962.6px;font-size:14.6px;color:#5e5e5e">Medium</div>
<div class="t" style="right:1471px;top:962.6px;font-size:14.6px;color:#2f4a73">3.59</div>
<div class="t" style="right:1260px;top:962.6px;font-size:14.6px;color:#2f4a73">73</div>
<div class="a" style="left:23px;top:999px;width:18px;height:19px;background:#fff;border:1px solid #dddbda;border-radius:3px"></div>
<div class="t" style="left:48px;top:1001.2px;font-size:14.6px;color:#5e5e5e">High</div>
<div class="t" style="right:1471px;top:1001.2px;font-size:14.6px;color:#2f4a73">2.74</div>
<div class="t" style="right:1260px;top:1001.2px;font-size:14.6px;color:#2f4a73">88</div>

<!-- h scrollbar -->
<div class="a" style="left:15px;top:1031px;width:1874px;height:16px;background:#f1f1f1"></div>
<div class="a" style="left:32px;top:1032px;width:1838px;height:13px;background:#c1c1c1"></div>
<svg class="a" style="left:20px;top:1034px" width="6" height="10" viewBox="0 0 6 10"><path d="M5 1 V9 L1 5 Z" fill="#a3a3a3"/></svg>
<svg class="a" style="left:1876px;top:1034px" width="6" height="10" viewBox="0 0 6 10"><path d="M1 1 V9 L5 5 Z" fill="#505050"/></svg>
<div class="a" style="left:1889px;top:1031px;width:16px;height:16px;background:#dcdcdc"></div>
<!-- footer -->
<div class="a" style="left:15px;top:1047px;width:1890px;height:33px;background:#f8f8f8;border-top:1px solid #e5e5e5"></div>
<div class="t" style="left:25px;top:1059px;font-size:14.6px;color:#4a4846">Row Counts</div>
<div class="a" style="left:114px;top:1054px;width:51px;height:22px;background:#b0adab;border-radius:11px"></div>
<div class="a" style="left:118px;top:1056px;width:18px;height:18px;background:#fff;border-radius:50%"></div>
<div class="t" style="left:185px;top:1059px;font-size:14.6px;color:#4a4846">Detail Rows</div>
<div class="a" style="left:272px;top:1054px;width:51px;height:22px;background:#b0adab;border-radius:11px"></div>
<div class="a" style="left:276px;top:1056px;width:18px;height:18px;background:#fff;border-radius:50%"></div>
<div class="t" style="left:343px;top:1059px;font-size:14.6px;color:#4a4846">Subtotals</div>
<div class="a" style="left:415px;top:1054px;width:51px;height:22px;background:#0070d2;border-radius:11px"></div>
<div class="a" style="left:446px;top:1056px;width:18px;height:18px;background:#fff;border-radius:50%"></div>
<svg class="a" style="left:423px;top:1058px" width="18" height="14" viewBox="0 0 18 14"><path d="M2 7 L6.5 12 L16.5 2" fill="none" stroke="#fff" stroke-width="2"/></svg>
<div class="t" style="left:486px;top:1059px;font-size:14.6px;color:#4a4846">Grand Total</div>
<div class="a" style="left:572px;top:1054px;width:51px;height:22px;background:#b0adab;border-radius:11px"></div>
<div class="a" style="left:576px;top:1056px;width:18px;height:18px;background:#fff;border-radius:50%"></div>
</body></html>
